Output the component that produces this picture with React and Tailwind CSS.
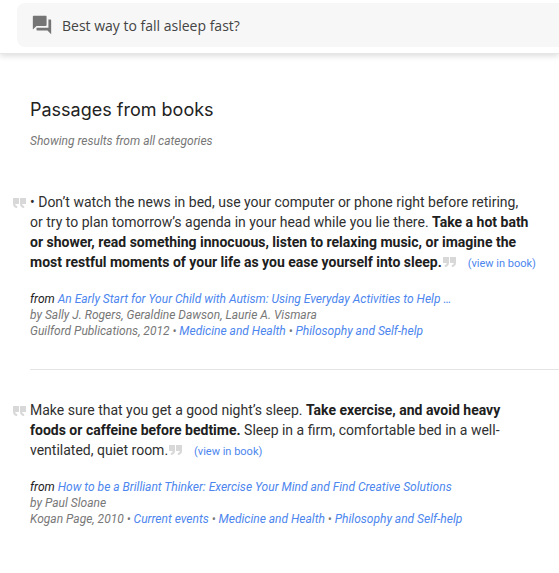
import React, { useState } from 'react'
import { MdQuestionAnswer } from 'react-icons/md'

const passages = [
    {
        id: 1,
        text: (
            <>
                • Don’t watch the news in bed, use your computer or phone right before retiring, or try to plan
                tomorrow’s agenda in your head while you lie there.{' '}
                <b className="text-[#202020]">
                    Take a hot bath or shower, read something innocuous, listen to relaxing music, or imagine the
                    most restful moments of your life as you ease yourself into sleep.
                </b>
            </>
        ),
        title: 'An Early Start for Your Child with Autism: Using Everyday Activities to Help …',
        authors: 'Sally J. Rogers, Geraldine Dawson, Laurie A. Vismara',
        published: 'Guilford Publications, 2012',
        categories: ['Medicine and Health', 'Philosophy and Self-help']
    },
    {
        id: 2,
        text: (
            <>
                Make sure that you get a good night’s sleep.{' '}
                <b className="text-[#202020]">Take exercise, and avoid heavy foods or caffeine before bedtime.</b>{' '}
                Sleep in a firm, comfortable bed in a well-ventilated, quiet room.
            </>
        ),
        title: 'How to be a Brilliant Thinker: Exercise Your Mind and Find Creative Solutions',
        authors: 'Paul Sloane',
        published: 'Kogan Page, 2010',
        categories: ['Current events', 'Medicine and Health', 'Philosophy and Self-help']
    }
]

const QuoteMark = ({ className }) => (
    <svg viewBox="0 0 13 10" className={`h-[10px] w-[13px] fill-[#d8d8d8] ${className}`} aria-hidden="true">
        <path d="M0 0h6v5.500C6 8.300 4.500 10 1.800 10V8C3 8 3.700 7.200 3.700 6H0z" />
        <path d="M7 0h6v5.500C13 8.300 11.500 10 8.800 10V8c1.200 0 1.900-.8 1.900-2H7z" />
    </svg>
)

const Passage = ({ passage }) => (
    <article className="border-b border-[#e4e4e4] py-[30px] last:border-b-0">
        <div className="flex items-start pr-7">
            <QuoteMark className="mt-[6px] mr-1 -ml-[17px] shrink-0 -scale-x-100" />
            <p className="text-[14px] leading-[20px] text-[#303030]">
                {passage.text}
                <QuoteMark className="ml-px inline-block align-baseline" />
                <a href="#" className="-mr-4 ml-3 text-[11px] whitespace-nowrap text-[#4c86ee]">(view in book)</a>
            </p>
        </div>
        <div className="mt-[17px] text-[12px] leading-[16px] text-[#777] italic">
            <div>
                <span className="text-[#222]">from</span>{' '}
                <a href="#" className="text-[#4c86ee]">{passage.title}</a>
            </div>
            <div>by {passage.authors}</div>
            <div>
                {passage.published}
                {passage.categories.map((category) => (
                    <React.Fragment key={category}>
                        {' • '}
                        <a href="#" className="text-[#4c86ee]">{category}</a>
                    </React.Fragment>
                ))}
            </div>
        </div>
    </article>
)

const App = () => {
    const [query, setQuery] = useState('Best way to fall asleep fast?')

    return (
        <div className="min-h-screen bg-white font-[Roboto,sans-serif]">
            <header className="border-b border-[#e6e6e6] pt-[3px] pb-[6px] pl-[17px] shadow-[0_2px_6px_rgba(0,0,0,0.14)]">
                <form
                    className="flex h-11 items-center rounded-l-lg bg-[#f7f7f7] pl-[14px]"
                    onSubmit={(e) => e.preventDefault()}
                >
                    <MdQuestionAnswer className="h-[22px] w-[22px] shrink-0 text-[#757575]" aria-hidden="true" />
                    <input
                        type="text"
                        aria-label="Ask a question"
                        className="ml-[9px] min-w-0 flex-1 bg-transparent font-['Open_Sans',sans-serif] text-[14px] text-[#444] outline-none"
                        value={query}
                        onChange={(e) => setQuery(e.target.value)}
                    />
                </form>
            </header>

            <main className="pt-[44px] pl-[30px]">
                <div className="pr-4">
                    <h1 className="font-[Inter,sans-serif] text-[18px] leading-6 text-[#222]">Passages from books</h1>
                    <p className="mt-[11px] text-[12px] leading-[16px] text-[#777] italic">
                        Showing results from all categories
                    </p>
                </div>
                <section className="mt-[13px]">
                    {passages.map((passage) => (
                        <Passage key={passage.id} passage={passage} />
                    ))}
                </section>
            </main>
        </div>
    )
}

export default App
